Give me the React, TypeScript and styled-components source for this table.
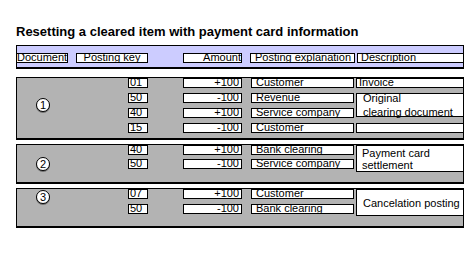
import React from 'react'
import styled, { createGlobalStyle } from 'styled-components'

type Row = { key: string; amount: string; text: string }
type Desc = { row: number; span: number; height?: number; lines: string[]; lh?: number; pad?: number }
type Block = { no: number; height: number; gap: number; circleTop: number; rows: Row[]; descs: Desc[] }

const blocks: Block[] = [
  {
    no: 1,
    height: 63,
    gap: 5,
    circleTop: 20,
    rows: [
      { key: '01', amount: '+100', text: 'Customer' },
      { key: '50', amount: '-100', text: 'Revenue' },
      { key: '40', amount: '+100', text: 'Service company' },
      { key: '15', amount: '-100', text: 'Customer' },
    ],
    descs: [
      { row: 1, span: 1, lines: ['Invoice'], pad: 2 },
      { row: 2, span: 2, height: 24, lines: ['Original', 'clearing document'], lh: 14, pad: 6 },
      { row: 4, span: 1, lines: [] },
    ],
  },
  {
    no: 2,
    height: 40,
    gap: 4,
    circleTop: 12,
    rows: [
      { key: '40', amount: '+100', text: 'Bank clearing' },
      { key: '50', amount: '-100', text: 'Service company' },
    ],
    descs: [{ row: 1, span: 2, height: 27, lines: ['Payment card', 'settlement'], lh: 12, pad: 5 }],
  },
  {
    no: 3,
    height: 40,
    gap: 5,
    circleTop: 1,
    rows: [
      { key: '07', amount: '+100', text: 'Customer' },
      { key: '50', amount: '-100', text: 'Bank clearing' },
    ],
    descs: [{ row: 1, span: 2, height: 27, lines: ['Cancelation posting'], lh: 12, pad: 6 }],
  },
]

const App: React.FC = () => {
  return (
    <>
      <GlobalStyle />
      <Page>
        <Title>Resetting a cleared item with payment card information</Title>
        <HeaderBar>
          <HeadCell $w={52} $ml={-1}>Document</HeadCell>
          <HeadCell $w={72} $ml={8} $align="center">Posting key</HeadCell>
          <HeadCell $w={59} $ml={35} $align="right">Amount</HeadCell>
          <HeadCell $w={105} $ml={8} $pad={4}>Posting explanation</HeadCell>
          <HeadCell $ml={2} $pad={3} $grow>Description</HeadCell>
        </HeaderBar>
        {blocks.map((b) => (
          <Section key={b.no} $h={b.height} $gap={b.gap}>
            <CircleCell style={{ gridRow: `1 / span ${b.rows.length}` }} $top={b.circleTop}>
              <Circle>{b.no}</Circle>
            </CircleCell>
            {b.rows.map((r, i) => (
              <React.Fragment key={i}>
                <KeyBox style={{ gridRow: i + 1 }}>{r.key}</KeyBox>
                <AmountBox style={{ gridRow: i + 1 }}>{r.amount}</AmountBox>
                <TextBox style={{ gridRow: i + 1 }}>{r.text}</TextBox>
              </React.Fragment>
            ))}
            {b.descs.map((d, i) =>
              d.span > 1 ? (
                <DescBlock
                  key={i}
                  style={{ gridRow: `${d.row} / span ${d.span}`, height: d.height }}
                  $lh={d.lh || 12}
                  $pad={d.pad || 2}
                >
                  {d.lines.map((l) => (
                    <span key={l}>{l}</span>
                  ))}
                </DescBlock>
              ) : (
                <DescLine key={i} style={{ gridRow: d.row }} $pad={d.pad || 2}>
                  {d.lines[0]}
                </DescLine>
              ),
            )}
          </Section>
        ))}
      </Page>
    </>
  )
}

const GlobalStyle = createGlobalStyle`
  body {
    margin: 0;
    background: #ffffff;
    font-family: 'Liberation Sans', Arial, sans-serif;
    color: #000;
  }
`

const Page = styled.div`
  padding: 24px 0 0 16px;
  width: 448px;
`

const Title = styled.div`
  font-size: 13px;
  font-weight: bold;
  line-height: 15px;
  white-space: nowrap;
`

const HeaderBar = styled.div`
  margin-top: 6px;
  margin-bottom: 8px;
  height: 24px;
  box-sizing: border-box;
  border: 1px solid #000;
  border-bottom-width: 2px;
  background: #ccccff;
  display: flex;
  align-items: flex-end;
  padding-bottom: 4px;
`

const HeadCell = styled.div<{ $w?: number; $ml: number; $align?: string; $pad?: number; $grow?: boolean }>`
  box-sizing: border-box;
  height: 10px;
  width: ${(p) => (p.$w ? `${p.$w}px` : 'auto')};
  flex: ${(p) => (p.$grow ? '1' : 'none')};
  margin-left: ${(p) => p.$ml}px;
  margin-right: ${(p) => (p.$grow ? '-1px' : '0')};
  padding: 0 ${(p) => p.$pad || 0}px;
  border: 1px solid #000;
  background: #fff;
  font-size: 11px;
  line-height: 6px;
  text-align: ${(p) => p.$align || 'left'};
  white-space: nowrap;
`

const Section = styled.div<{ $h: number; $gap: number }>`
  margin-top: 4px;
  height: ${(p) => p.$h}px;
  box-sizing: border-box;
  border: 1px solid #000;
  border-bottom-width: 2px;
  background: #b3b3b3;
  display: grid;
  grid-template-columns: 111px 20px 35px 59px 9px 103px 2px 1fr;
  grid-auto-rows: 10px;
  row-gap: ${(p) => p.$gap}px;
  align-content: start;
`

const Box = styled.div`
  box-sizing: border-box;
  height: 10px;
  border: 1px solid #000;
  background: #fff;
  font-size: 11px;
  line-height: 6px;
  white-space: nowrap;
`

const KeyBox = styled(Box)`
  grid-column: 2;
  padding-left: 1px;
`

const AmountBox = styled(Box)`
  grid-column: 4;
  text-align: right;
  padding-right: 2px;
`

const TextBox = styled(Box)`
  grid-column: 6;
  padding-left: 4px;
`

const DescLine = styled(Box)<{ $pad: number }>`
  grid-column: 8;
  margin-right: -1px;
  padding-left: ${(p) => p.$pad}px;
`

const DescBlock = styled.div<{ $lh: number; $pad: number }>`
  grid-column: 8;
  align-self: start;
  margin-right: -1px;
  box-sizing: border-box;
  border: 1px solid #000;
  background: #fff;
  display: flex;
  flex-direction: column;
  justify-content: center;
  padding-left: ${(p) => p.$pad}px;
  font-size: 11px;
  line-height: ${(p) => p.$lh}px;
  white-space: nowrap;
`

const CircleCell = styled.div<{ $top: number }>`
  grid-column: 1;
  align-self: start;
  padding: ${(p) => p.$top}px 0 0 19px;
`

const Circle = styled.div`
  width: 14px;
  height: 14px;
  box-sizing: border-box;
  border: 1px solid #000;
  border-radius: 50%;
  background: #fff;
  box-shadow: 0 1px 0 #6e6e6e;
  display: flex;
  align-items: center;
  justify-content: center;
  font-size: 11px;
  line-height: 12px;
`

export default App
